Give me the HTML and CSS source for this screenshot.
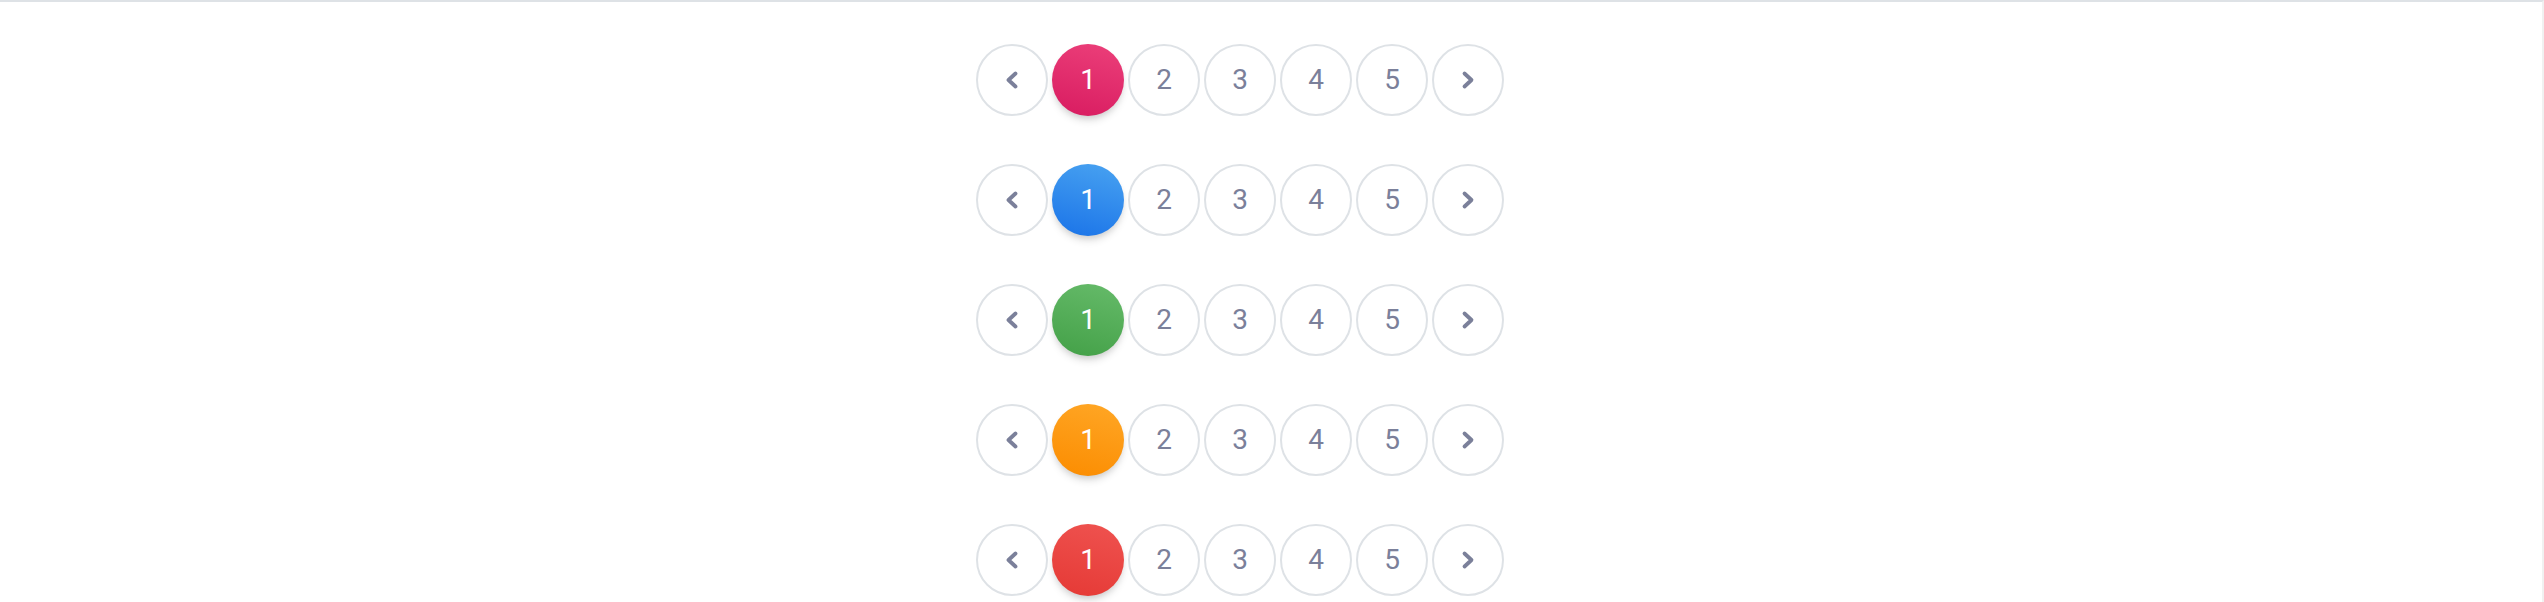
FILE: index.html
```html
<!DOCTYPE html>
<html lang="en">
<head>
<meta charset="utf-8">
<title>Pagination</title>
<link rel="stylesheet" href="styles.css">
</head>
<body>
<div class="page">
  <nav class="pagination pagination-primary">
    <a class="page-link"><svg viewBox="0 0 32 32" class="chev"><polyline points="19.5,9.5 12.5,16 19.5,22.5"/></svg></a>
    <a class="page-link active">1</a>
    <a class="page-link">2</a>
    <a class="page-link">3</a>
    <a class="page-link">4</a>
    <a class="page-link">5</a>
    <a class="page-link"><svg viewBox="0 0 32 32" class="chev"><polyline points="12.5,9.5 19.5,16 12.5,22.5"/></svg></a>
  </nav>
  <nav class="pagination pagination-info">
    <a class="page-link"><svg viewBox="0 0 32 32" class="chev"><polyline points="19.5,9.5 12.5,16 19.5,22.5"/></svg></a>
    <a class="page-link active">1</a>
    <a class="page-link">2</a>
    <a class="page-link">3</a>
    <a class="page-link">4</a>
    <a class="page-link">5</a>
    <a class="page-link"><svg viewBox="0 0 32 32" class="chev"><polyline points="12.5,9.5 19.5,16 12.5,22.5"/></svg></a>
  </nav>
  <nav class="pagination pagination-success">
    <a class="page-link"><svg viewBox="0 0 32 32" class="chev"><polyline points="19.5,9.5 12.5,16 19.5,22.5"/></svg></a>
    <a class="page-link active">1</a>
    <a class="page-link">2</a>
    <a class="page-link">3</a>
    <a class="page-link">4</a>
    <a class="page-link">5</a>
    <a class="page-link"><svg viewBox="0 0 32 32" class="chev"><polyline points="12.5,9.5 19.5,16 12.5,22.5"/></svg></a>
  </nav>
  <nav class="pagination pagination-warning">
    <a class="page-link"><svg viewBox="0 0 32 32" class="chev"><polyline points="19.5,9.5 12.5,16 19.5,22.5"/></svg></a>
    <a class="page-link active">1</a>
    <a class="page-link">2</a>
    <a class="page-link">3</a>
    <a class="page-link">4</a>
    <a class="page-link">5</a>
    <a class="page-link"><svg viewBox="0 0 32 32" class="chev"><polyline points="12.5,9.5 19.5,16 12.5,22.5"/></svg></a>
  </nav>
  <nav class="pagination pagination-danger">
    <a class="page-link"><svg viewBox="0 0 32 32" class="chev"><polyline points="19.5,9.5 12.5,16 19.5,22.5"/></svg></a>
    <a class="page-link active">1</a>
    <a class="page-link">2</a>
    <a class="page-link">3</a>
    <a class="page-link">4</a>
    <a class="page-link">5</a>
    <a class="page-link"><svg viewBox="0 0 32 32" class="chev"><polyline points="12.5,9.5 19.5,16 12.5,22.5"/></svg></a>
  </nav>
</div>
</body>
</html>
```

FILE: styles.css
```css
html, body {
  margin: 0;
  padding: 0;
  background: #ffffff;
  height: 602px;
  overflow: hidden;
}
.page {
  box-sizing: border-box;
  width: 2544px;
  height: 602px;
  border-top: 2px solid #dee2e6;
  border-right: 2px solid #f1f1f1;
  padding: 42px 62px 0 0;
  display: flex;
  flex-direction: column;
  align-items: center;
  gap: 48px;
  font-family: Roboto, "Liberation Sans", sans-serif;
}
.pagination {
  display: flex;
  gap: 4px;
}
.page-link {
  box-sizing: border-box;
  width: 72px;
  height: 72px;
  border-radius: 50%;
  border: 2px solid #dee2e6;
  display: flex;
  align-items: center;
  justify-content: center;
  color: #7b809a;
  font-size: 28px;
  font-weight: 400;
  line-height: 1;
  background: #fff;
}
.chev {
  width: 32px;
  height: 32px;
  fill: none;
  stroke: #7b809a;
  stroke-width: 3.8;
  stroke-linecap: round;
  stroke-linejoin: round;
}
.page-link.active {
  border: none;
  color: #fff;
  box-shadow: 0 6px 8px -2px rgba(0, 0, 0, 0.14), 0 3px 6px -2px rgba(0, 0, 0, 0.1);
}
.pagination-primary .active {
  background-image: linear-gradient(195deg, #ec407a 0%, #d81b60 100%);
}
.pagination-info .active {
  background-image: linear-gradient(195deg, #49a3f1 0%, #1a73e8 100%);
}
.pagination-success .active {
  background-image: linear-gradient(195deg, #66bb6a 0%, #43a047 100%);
}
.pagination-warning .active {
  background-image: linear-gradient(195deg, #ffa726 0%, #fb8c00 100%);
}
.pagination-danger .active {
  background-image: linear-gradient(195deg, #ef5350 0%, #e53935 100%);
}
```
